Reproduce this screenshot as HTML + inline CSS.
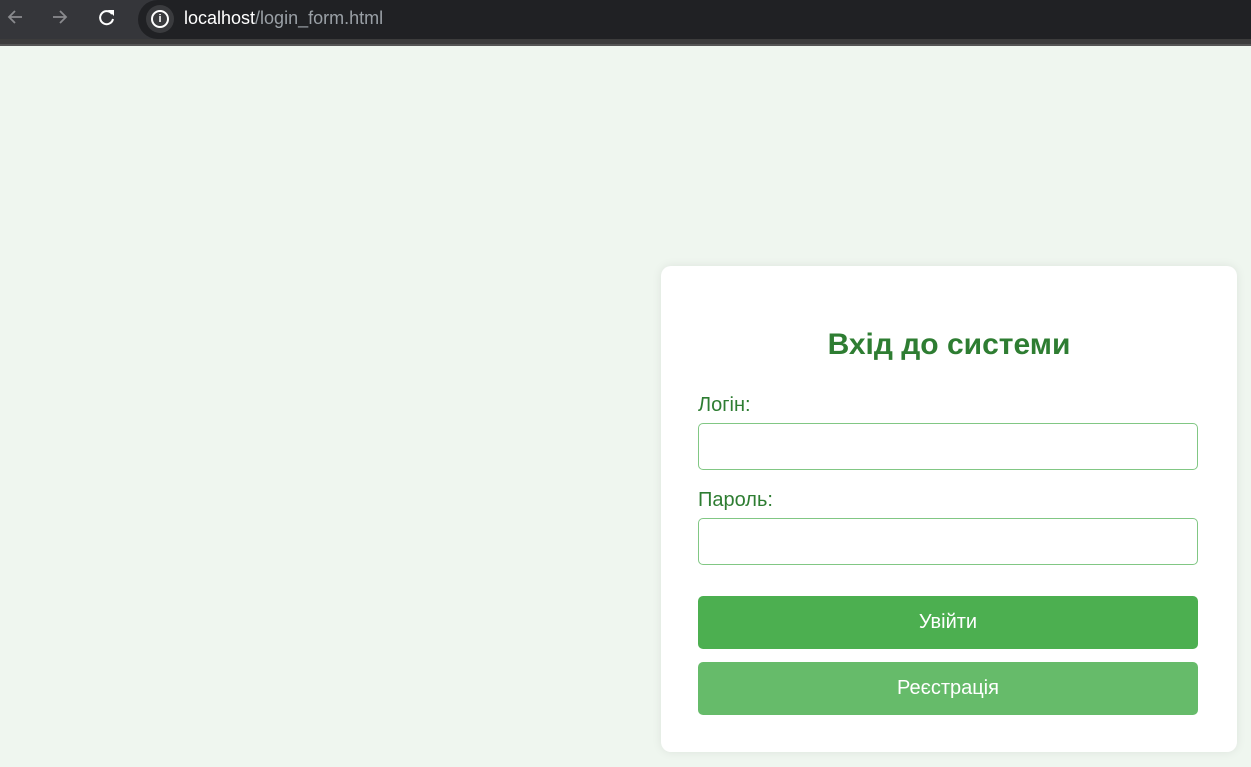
<!DOCTYPE html>
<html><head><meta charset="utf-8"><style>
*{box-sizing:border-box;margin:0;padding:0}
body{width:1251px;height:767px;overflow:hidden;background:#eff6ef;font-family:"Liberation Sans",Arial,sans-serif;position:relative}
.bar{position:absolute;left:0;top:0;width:1251px;height:46px;background:#35363a}
.url{position:absolute;left:138px;top:0;width:1113px;height:39px;background:#202124;border-radius:20px 0 0 20px}
.strip{position:absolute;left:0;top:39px;width:1251px;height:7px;background:#3c3c3c;border-bottom:2px solid #555}
.card{position:absolute;left:661px;top:266px;width:576px;height:486px;background:#fff;border-radius:10px;box-shadow:0 0 10px rgba(0,0,0,.08)}
h2{position:absolute;width:576px;top:327px;text-align:center;color:#2e7d32;font-size:30px;font-weight:bold}
.lbl{position:absolute;left:698px;color:#2e7d32;font-size:20px}
.inp{position:absolute;left:698px;width:500px;height:47px;border:1px solid #81c784;border-radius:5px;background:#fff}
.btn{position:absolute;left:698px;width:500px;height:53px;border-radius:5px;color:#fff;font-size:20px;text-align:center;line-height:53px}
</style></head><body>
<div class="bar"></div>
<div class="strip"></div>
<div class="url"></div>
<svg style="position:absolute;left:0;top:0" width="140" height="40">
<g fill="none" stroke="#8a8b8e" stroke-width="1.8"><path d="M22 17H9M15 11l-6 6 6 6"/><path d="M53 17h13M60 11l6 6-6 6"/></g>
<path d="M112 14a6.5 6.5 0 1 0 1 5" fill="none" stroke="#fff" stroke-width="2"/><path d="M108 10h6v6z" fill="#fff"/>
</svg>
<div style="position:absolute;left:146px;top:5px;width:28px;height:28px;border-radius:14px;background:#3a3b3e"></div>
<div style="position:absolute;left:151px;top:10px;width:18px;height:18px;border:2px solid #fff;border-radius:9px;color:#fff;font-size:11px;font-weight:bold;text-align:center;line-height:14px">i</div>
<div style="position:absolute;left:184px;top:8px;font-size:18px;color:#fff">localhost<span style="color:#9aa0a6">/login_form.html</span></div>
<div class="card"></div>
<h2 style="left:661px;top:328px">Вхід до системи</h2>
<div class="lbl" style="top:394px">Логін:</div>
<div class="inp" style="top:423px"></div>
<div class="lbl" style="top:489px">Пароль:</div>
<div class="inp" style="top:518px"></div>
<div class="btn" style="top:596px;background:#4caf50">Увійти</div>
<div class="btn" style="top:662px;background:#66bb6a">Реєстрація</div>
</body></html>
